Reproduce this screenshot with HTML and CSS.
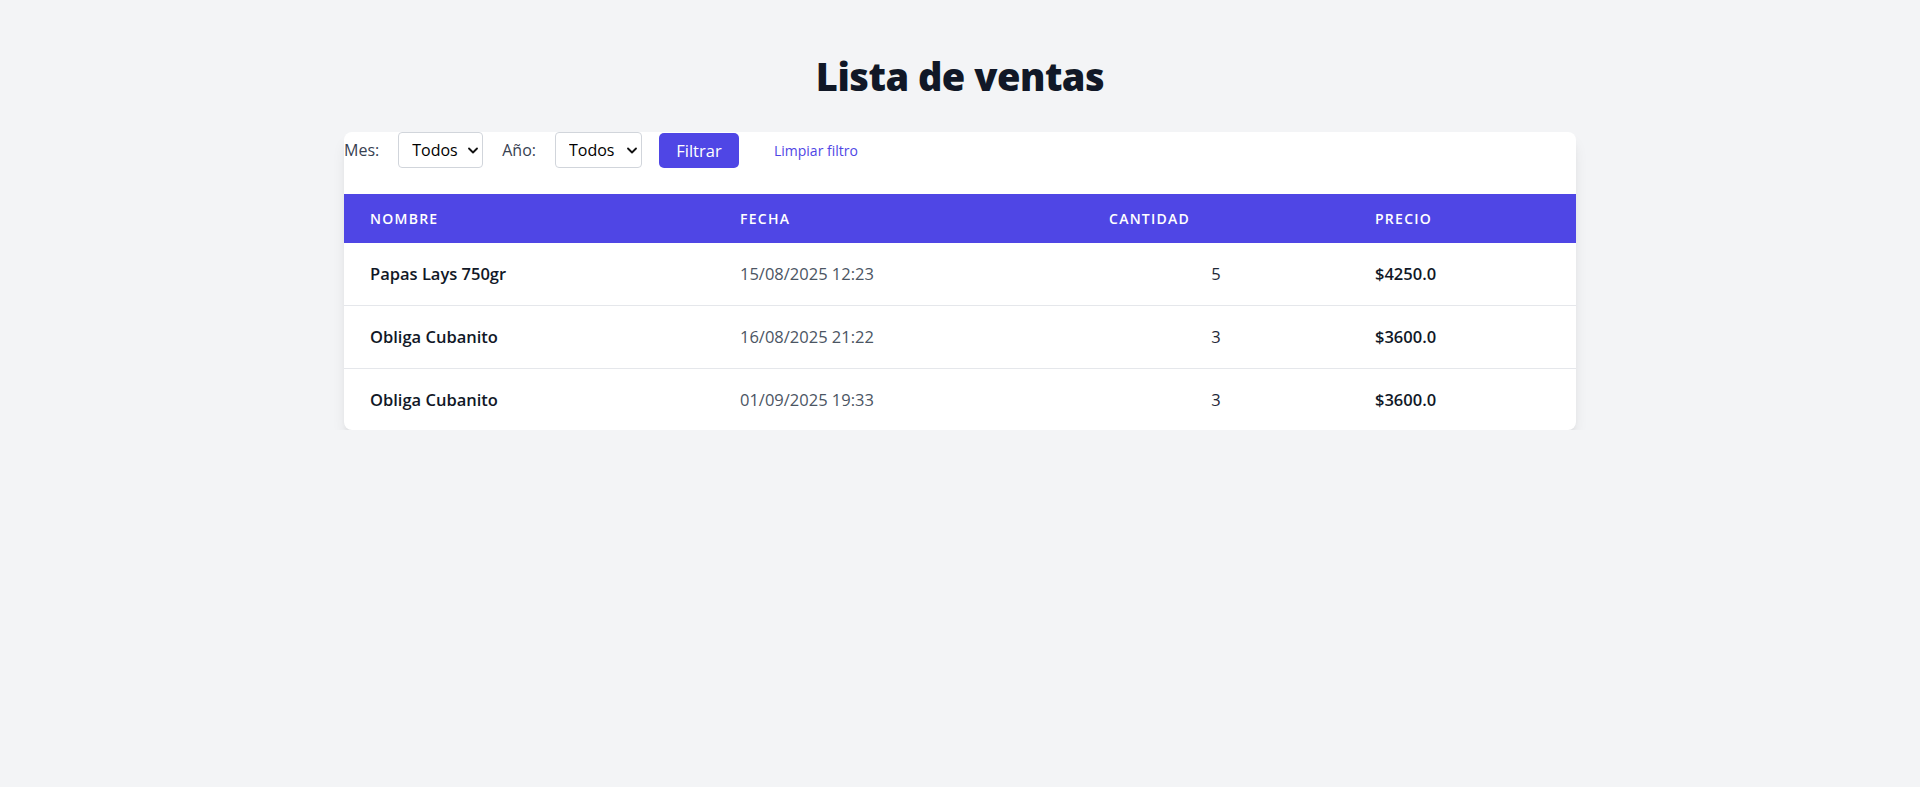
FILE: index.html
```html
<!DOCTYPE html>
<html lang="es">
<head>
<meta charset="utf-8">
<title>Lista de ventas</title>
<link rel="stylesheet" href="styles.css">
</head>
<body>
<main class="page">
  <h1 class="title">Lista de ventas</h1>
  <section class="card">
    <form class="filters">
      <label class="filter-label" for="mes">Mes:</label>
      <span class="select-wrap">
        <select id="mes" class="select"><option>Todos</option></select>
        <svg class="chevron" viewBox="0 0 10 6" width="10" height="7"><path d="M1 1l4 4 4-4" fill="none" stroke="#111" stroke-width="1.8" stroke-linecap="round" stroke-linejoin="round"/></svg>
      </span>
      <label class="filter-label" for="anio">Año:</label>
      <span class="select-wrap select-wrap-wide">
        <select id="anio" class="select"><option>Todos</option></select>
        <svg class="chevron" viewBox="0 0 10 6" width="10" height="7"><path d="M1 1l4 4 4-4" fill="none" stroke="#111" stroke-width="1.8" stroke-linecap="round" stroke-linejoin="round"/></svg>
      </span>
      <button type="button" class="btn-primary">Filtrar</button>
      <a class="link-clear" href="#">Limpiar filtro</a>
    </form>
    <table class="table">
      <colgroup>
        <col class="col-nombre"><col class="col-fecha"><col class="col-cantidad"><col class="col-precio">
      </colgroup>
      <thead>
        <tr><th>Nombre</th><th>Fecha</th><th>Cantidad</th><th>Precio</th></tr>
      </thead>
      <tbody>
        <tr><td class="cell-name">Papas Lays 750gr</td><td class="cell-date">15/08/2025 12:23</td><td class="cell-qty">5</td><td class="cell-price">$4250.0</td></tr>
        <tr><td class="cell-name">Obliga Cubanito</td><td class="cell-date">16/08/2025 21:22</td><td class="cell-qty">3</td><td class="cell-price">$3600.0</td></tr>
        <tr><td class="cell-name">Obliga Cubanito</td><td class="cell-date">01/09/2025 19:33</td><td class="cell-qty">3</td><td class="cell-price">$3600.0</td></tr>
      </tbody>
    </table>
  </section>
</main>
</body>
</html>
```
FILE: styles.css
```css
* { box-sizing: border-box; }
html, body { margin: 0; padding: 0; }
body {
  background: #f3f4f6;
  font-family: "Open Sans", "Noto Sans", "Liberation Sans", sans-serif;
  color: #111827;
}
.page {
  max-width: 1232px;
  margin: 0 auto;
  padding-top: 52px;
}
.title {
  margin: 0 0 32px;
  text-align: center;
  font-size: 38px;
  line-height: 48px;
  font-weight: 800;
  letter-spacing: -0.5px;
  color: #111827;
}
.card {
  background: #fff;
  border-radius: 8px;
  overflow: hidden;
  box-shadow: 0 10px 15px -3px rgba(0,0,0,0.1), 0 4px 6px -4px rgba(0,0,0,0.1);
}
.filters {
  display: flex;
  align-items: center;
  height: 36px;
  margin-bottom: 26px;
}
.filter-label {
  font-size: 16px;
  color: #374151;
  margin-right: 19px;
}
.select-wrap {
  position: relative;
  display: inline-block;
  width: 85px;
  height: 36px;
  margin-right: 19px;
}
.select-wrap-wide { width: 87px; margin-right: 17px; }
.select {
  appearance: none;
  -webkit-appearance: none;
  width: 100%;
  height: 100%;
  border: 1px solid #d1d5db;
  border-radius: 4px;
  background: #fff;
  padding: 0 0 0 13px;
  font-family: inherit;
  font-size: 16px;
  color: #000;
}
.chevron {
  position: absolute;
  right: 5px;
  top: 15px;
  pointer-events: none;
}
.btn-primary {
  width: 80px;
  height: 35px;
  padding: 0;
  border: 0;
  border-radius: 5px;
  background: #4f46e5;
  color: #fff;
  font-family: inherit;
  font-size: 16.5px;
}
.link-clear {
  margin-left: 35px;
  font-size: 14px;
  color: #4f46e5;
  text-decoration: none;
}
.table {
  width: 100%;
  border-collapse: collapse;
  table-layout: fixed;
}
.col-nombre { width: 370px; }
.col-fecha { width: 369px; }
.col-cantidad { width: 266px; }
.col-precio { width: 227px; }
.table th {
  background: #4f46e5;
  color: #fff;
  text-align: left;
  text-transform: uppercase;
  font-size: 14px;
  font-weight: 600;
  letter-spacing: 0.09em;
  height: 49px;
  padding: 0 26px;
}
.table td {
  padding: 20px 26px 21px;
  font-size: 16.5px;
  line-height: 21px;
  border-top: 1px solid #e5e7eb;
}
.table tbody tr:first-child td { border-top: 0; }
.table tbody tr:last-child td { padding-bottom: 20px; }
.cell-name { font-weight: 600; color: #111827; }
.cell-date { color: #4b5563; }
.cell-qty { text-align: center; color: #1f2937; }
.cell-price { font-weight: 600; color: #111827; }
```
